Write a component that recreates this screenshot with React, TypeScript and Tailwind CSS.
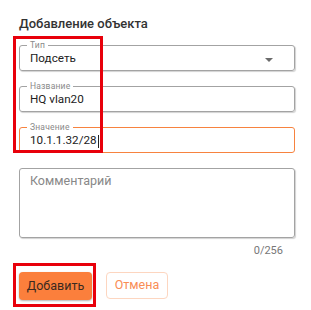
import React from "react";

function Field({ label, value, focused, select }: { label: string; value: string; focused?: boolean; select?: boolean }) {
  return (
    <div
      className={`relative h-[26px] w-[276px] rounded-[3px] border ${focused ? "border-[#f7833f]" : "border-[#a3a3a3] shadow-[1px_1px_1px_rgba(0,0,0,0.18)]"}`}
    >
      <span className="absolute left-[7px] top-[-6px] bg-white px-[3px] text-[8.5px] leading-[10px] tracking-[0.2px] text-[#8a8a8a]">{label}</span>
      <div className="flex h-full items-center pl-[10px] pt-[2px] text-[11.7px] text-[#222]">
        {value}
        {focused && <span className="ml-[1px] inline-block h-[13px] w-px bg-[#222]" />}
      </div>
      {select && (
        <svg className="absolute right-[21px] top-[12px]" width="8" height="4" viewBox="0 0 8 4">
          <path d="M0 0 L8 0 L4 4 Z" fill="#6b6b6b" />
        </svg>
      )}
    </div>
  );
}

export default function App() {
  return (
    <div className="relative h-[310px] w-[311px] bg-white" style={{ fontFamily: "Roboto, 'Noto Sans', sans-serif" }}>
      <div className="pl-[19px] pt-[15px]">
        <div className="text-[13px] font-medium leading-[17px] text-[#333]">Добавление объекта</div>
        <div className="mt-[13px] flex flex-col gap-[15px]">
          <Field label="Тип" value="Подсеть" select />
          <Field label="Название" value="HQ vlan20" />
          <Field label="Значение" value="10.1.1.32/28" focused />
        </div>
        <div className="mt-[15px] h-[70px] w-[276px] rounded-[3px] border border-[#a3a3a3] shadow-[1px_1px_1px_rgba(0,0,0,0.18)] px-[10px] pt-[3px] text-[12.5px] text-[#888]">
          Комментарий
        </div>
        <div className="mt-[6px] w-[264px] text-right text-[11px] leading-[13px] text-[#777]">0/256</div>
        <div className="mt-[15px] flex gap-[14px]">
          <button className="h-[28px] w-[73px] rounded-[4px] bg-[#fb7f3c] text-[12.5px] text-[#3a2a20] shadow-[0_1px_2px_rgba(0,0,0,0.3)]">
            Добавить
          </button>
          <button className="h-[27px] w-[62px] rounded-[4px] border border-[#fdd6c0] bg-white text-[12.5px] text-[#f98d55]">
            Отмена
          </button>
        </div>
      </div>
      <div className="absolute left-[13px] top-[36px] h-[117px] w-[90px] border-[3px] border-[#e8000b]" />
      <div className="absolute left-[13px] top-[263px] h-[44px] w-[83px] border-[3px] border-[#e8000b]" />
    </div>
  );
}
